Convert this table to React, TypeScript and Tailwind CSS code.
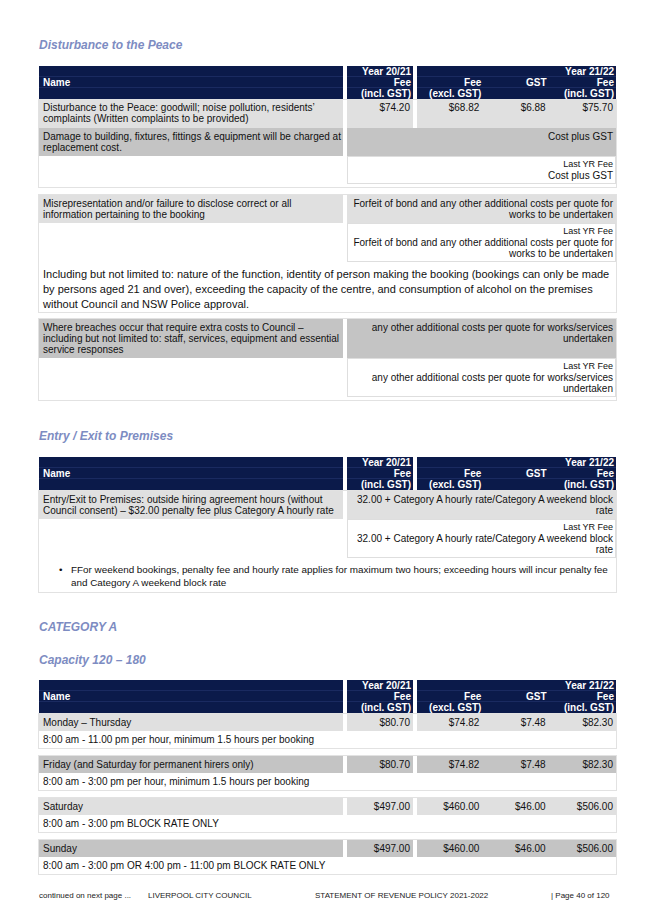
import React from "react";

const NAVY = "bg-[#0b1a4a]";

function Header() {
  return (
    <div className="mx-px flex gap-[4px] text-[10px] font-bold leading-[11px] text-white">
      <div className={`w-[304px] ${NAVY} flex flex-col`}>
        <div className="h-[11px] border-b border-[#1a2a60]" />
        <div className="h-[11px] border-b border-[#1a2a60] pl-[4px]">Name</div>
        <div className="h-[11px]" />
      </div>
      <div className={`w-[66px] ${NAVY} flex flex-col text-right pr-[2px]`}>
        <div className="h-[11px] border-b border-[#1a2a60]">Year 20/21</div>
        <div className="h-[11px] border-b border-[#1a2a60]">Fee</div>
        <div className="h-[11px]">(incl. GST)</div>
      </div>
      <div className={`flex-1 ${NAVY} flex flex-col`}>
        <div className="h-[11px] border-b border-[#1a2a60] text-right pr-[2px]">Year 21/22</div>
        <div className="grid h-[11px] grid-cols-3 border-b border-[#1a2a60] text-right">
          <div className="pr-[2px]">Fee</div>
          <div className="pr-[3px]">GST</div>
          <div className="pr-[2px]">Fee</div>
        </div>
        <div className="grid h-[11px] grid-cols-3 text-right">
          <div className="pr-[2px]">(excl. GST)</div>
          <div />
          <div className="pr-[2px]">(incl. GST)</div>
        </div>
      </div>
    </div>
  );
}

function Title({ children, className = "" }: { children: React.ReactNode; className?: string }) {
  return (
    <div className={`text-[12px] font-bold italic leading-[14px] text-[#7d8cc2] ${className}`}>{children}</div>
  );
}

function PriceRow({
  name,
  dark,
  prices,
  compact,
}: {
  name: React.ReactNode;
  dark?: boolean;
  prices: [string, string, string, string];
  compact?: boolean;
}) {
  const bg = dark ? "bg-[#c4c4c4]" : "bg-[#e0e0e0]";
  const pad = compact ? "py-[3px]" : "pt-[2px] pb-[4px]";
  return (
    <div className="flex gap-[4px] text-[10px] leading-[11px] text-[#111]">
      <div className={`w-[304px] ${bg} ${pad} pl-[4px] whitespace-nowrap`}>{name}</div>
      <div className={`w-[66px] ${bg} ${pad} pr-[3px] text-right`}>{prices[0]}</div>
      <div className={`flex-1 ${bg} ${pad} grid grid-cols-3 text-right`}>
        <div className="pr-[4px]">{prices[1]}</div>
        <div className="pr-[4px]">{prices[2]}</div>
        <div className="pr-[3px]">{prices[3]}</div>
      </div>
    </div>
  );
}

function SpanRow({ name, value, dark }: { name: React.ReactNode; value: React.ReactNode; dark?: boolean }) {
  const bg = dark ? "bg-[#c4c4c4]" : "bg-[#e0e0e0]";
  return (
    <div className="flex gap-[4px] text-[10px] leading-[11px] text-[#111]">
      <div className={`w-[304px] ${bg} pt-[3px] pb-[3px] pl-[4px] whitespace-nowrap`}>{name}</div>
      <div className={`flex-1 ${bg} pt-[3px] pb-[3px] pl-[2px] pr-[3px] text-right whitespace-nowrap`}>{value}</div>
    </div>
  );
}

function LastYr({ value }: { value: React.ReactNode }) {
  return (
    <div className="flex gap-[4px] text-[10px] leading-[11px] text-[#111]">
      <div className="w-[304px]" />
      <div className="flex-1 border border-[#dedede] pt-[2px] pb-[2px] pl-[2px] pr-[2px] text-right whitespace-nowrap">
        <div className="text-[9px] leading-[11px]">Last YR Fee</div>
        <div>{value}</div>
      </div>
    </div>
  );
}

function Group({ children, className = "" }: { children: React.ReactNode; className?: string }) {
  return <div className={`border border-[#e2e2e2] ${className}`}>{children}</div>;
}

function DayGroup({
  name,
  dark,
  prices,
  detail,
}: {
  name: string;
  dark?: boolean;
  prices: [string, string, string, string];
  detail: string;
}) {
  return (
    <Group>
      <PriceRow name={name} dark={dark} prices={prices} compact />
      <div className="py-[3px] pl-[4px] text-[10px] leading-[11px] text-[#111]">{detail}</div>
    </Group>
  );
}

export default function App() {
  return (
    <div className="relative h-[924px] w-[653px] overflow-hidden bg-white font-['Liberation_Sans',Arial,Helvetica,sans-serif]">
      <div className="ml-[38px] w-[579px] pt-[38px]">
        <Title className="ml-px">Disturbance to the Peace</Title>
        <div className="mt-[14px]">
          <Header />
          <Group>
            <PriceRow
              name={
                <>
                  Disturbance to the Peace: goodwill; noise pollution, residents’
                  <br />
                  complaints (Written complaints to be provided)
                </>
              }
              prices={["$74.20", "$68.82", "$6.88", "$75.70"]}
            />
            <SpanRow
              dark
              name={
                <>
                  Damage to building, fixtures, fittings &amp; equipment will be charged at
                  <br />
                  replacement cost.
                </>
              }
              value="Cost plus GST"
            />
            <LastYr value="Cost plus GST" />
            <div className="h-[3px]" />
          </Group>

          <Group className="mt-[6px]">
            <SpanRow
              name={
                <>
                  Misrepresentation and/or failure to disclose correct or all
                  <br />
                  information pertaining to the booking
                </>
              }
              value={
                <>
                  Forfeit of bond and any other additional costs per quote for
                  <br />
                  works to be undertaken
                </>
              }
            />
            <LastYr
              value={
                <>
                  Forfeit of bond and any other additional costs per quote for
                  <br />
                  works to be undertaken
                </>
              }
            />
            <div className="pt-[5px] pl-[4px] pr-[6px] text-[11px] leading-[15px] text-[#111]">
              Including but not limited to: nature of the function, identity of person making the booking (bookings can only be made by persons aged 21 and over), exceeding the capacity of the centre, and consumption of alcohol on the premises without Council and NSW Police approval.
            </div>
          </Group>

          <Group className="mt-[5px]">
            <SpanRow
              dark
              name={
                <>
                  Where breaches occur that require extra costs to Council –
                  <br />
                  including but not limited to: staff, services, equipment and essential
                  <br />
                  service responses
                </>
              }
              value={
                <>
                  any other additional costs per quote for works/services
                  <br />
                  undertaken
                </>
              }
            />
            <LastYr
              value={
                <>
                  any other additional costs per quote for works/services
                  <br />
                  undertaken
                </>
              }
            />
            <div className="h-[3px]" />
          </Group>
        </div>

        <Title className="ml-px mt-[28px]">Entry / Exit to Premises</Title>
        <div className="mt-[14px]">
          <Header />
          <Group>
            <SpanRow
              name={
                <>
                  Entry/Exit to Premises: outside hiring agreement hours (without
                  <br />
                  Council consent) – $32.00 penalty fee plus Category A hourly rate
                </>
              }
              value={
                <>
                  32.00 + Category A hourly rate/Category A weekend block
                  <br />
                  rate
                </>
              }
            />
            <LastYr
              value={
                <>
                  32.00 + Category A hourly rate/Category A weekend block
                  <br />
                  rate
                </>
              }
            />
            <div className="flex pt-[5px] pb-[3px] pr-[2px] text-[9.9px] leading-[13px] text-[#111]">
              <div className="w-[32px] shrink-0 pl-[20px]">•</div>
              <div>
                FFor weekend bookings, penalty fee and hourly rate applies for maximum two hours; exceeding hours will incur penalty fee and Category A weekend block rate
              </div>
            </div>
          </Group>
        </div>

        <Title className="ml-px mt-[27px]">CATEGORY A</Title>
        <Title className="ml-px mt-[19px]">Capacity 120 – 180</Title>
        <div className="mt-[13px]">
          <Header />
          <div className="flex flex-col gap-[6px]">
            <DayGroup
              name="Monday – Thursday"
              prices={["$80.70", "$74.82", "$7.48", "$82.30"]}
              detail="8:00 am - 11.00 pm per hour, minimum 1.5 hours per booking"
            />
            <DayGroup
              dark
              name="Friday (and Saturday for permanent hirers only)"
              prices={["$80.70", "$74.82", "$7.48", "$82.30"]}
              detail="8:00 am - 3:00 pm per hour, minimum 1.5 hours per booking"
            />
            <DayGroup
              name="Saturday"
              prices={["$497.00", "$460.00", "$46.00", "$506.00"]}
              detail="8:00 am - 3:00 pm BLOCK RATE ONLY"
            />
            <DayGroup
              dark
              name="Sunday"
              prices={["$497.00", "$460.00", "$46.00", "$506.00"]}
              detail="8:00 am - 3:00 pm OR 4:00 pm - 11:00 pm BLOCK RATE ONLY"
            />
          </div>
        </div>
      </div>

      <div className="absolute left-[39px] top-[891px] flex text-[8px] leading-[10px] text-[#222]">
        <div className="w-[109px]">continued on next page ...</div>
        <div className="w-[167px]">LIVERPOOL CITY COUNCIL</div>
        <div className="w-[236px]">STATEMENT OF REVENUE POLICY 2021-2022</div>
        <div>| Page 40 of 120</div>
      </div>
    </div>
  );
}
